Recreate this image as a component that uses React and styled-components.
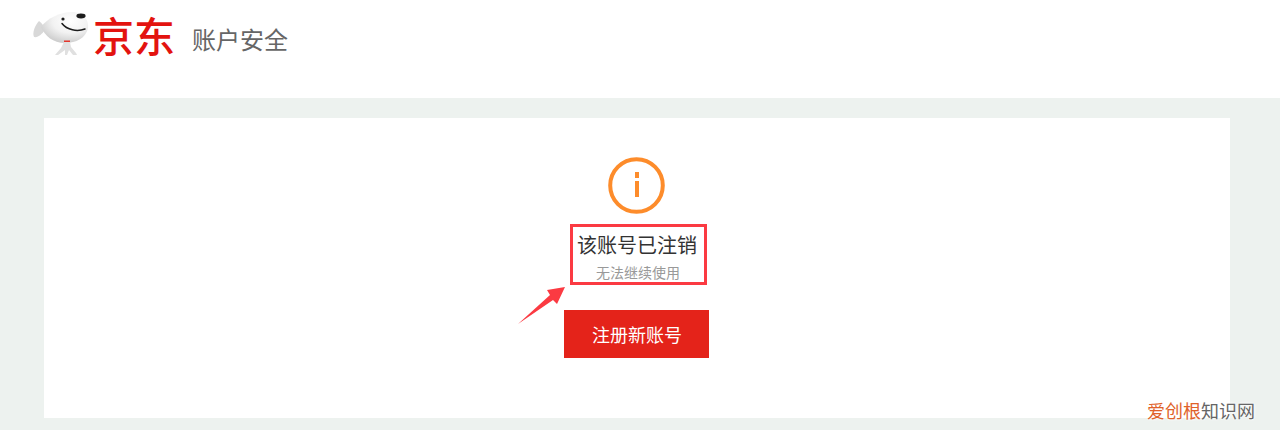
import React from "react";
import styled, { createGlobalStyle } from "styled-components";

const GlobalStyle = createGlobalStyle`
  html, body {
    margin: 0;
    padding: 0;
    background: #fff;
    font-family: "Noto Sans CJK SC", "Liberation Sans", sans-serif;
  }
`;

const Page = styled.div`
  position: relative;
  width: 1280px;
  height: 430px;
  overflow: hidden;
  background: #edf2ef;
`;

const Header = styled.header`
  height: 98px;
  box-sizing: border-box;
  background: #fff;
  padding: 12px 0 0 32px;
  display: flex;
  align-items: flex-start;
`;

const Logo = styled.div`
  display: flex;
  align-items: flex-end;
  height: 44px;
`;

const Brand = styled.span`
  margin-left: -3px;
  font-size: 41px;
  font-weight: 500;
  line-height: 44px;
  color: #e3130f;
  height: 44px;
`;

const Section = styled.span`
  margin-left: 17px;
  font-size: 24px;
  line-height: 54px;
  height: 44px;
  color: #666;
`;

const Card = styled.main`
  width: 1186px;
  height: 300px;
  margin: 20px 0 0 44px;
  padding: 39px 2px 0 0;
  box-sizing: border-box;
  background: #fff;
  display: flex;
  flex-direction: column;
  align-items: center;
`;

const Notice = styled.div`
  margin: 10px 0 0 4px;
  width: 137px;
  height: 61px;
  box-sizing: border-box;
  border: 3px solid #fb3a42;
  display: flex;
  flex-direction: column;
  align-items: center;
`;

const Title = styled.div`
  margin: 3px 2px 0 0;
  font-size: 20px;
  line-height: 30px;
  color: #333;
  white-space: nowrap;
`;

const Sub = styled.div`
  margin: 2px 0 0 0;
  font-size: 14px;
  line-height: 20px;
  color: #999;
  white-space: nowrap;
`;

const Button = styled.button`
  margin-top: 25px;
  width: 145px;
  height: 48px;
  border: 0;
  padding: 0 0 0 2px;
  background: #e4231a;
  color: #fff;
  font-family: inherit;
  font-size: 18px;
`;

const Arrow = styled.svg`
  position: absolute;
  left: 515px;
  top: 284px;
`;

const Watermark = styled.div`
  position: absolute;
  left: 1147px;
  top: 397px;
  font-size: 18px;
  line-height: 26px;
  color: #666;
  white-space: nowrap;
  text-shadow: 0 0 3px #fff, 0 0 3px #fff;
`;

const Accent = styled.span`
  color: #e0622a;
`;

const Mascot = () => (
  <svg width="64" height="46" viewBox="0 0 64 46" style={{ marginTop: -2 }}>
    <defs>
      <radialGradient id="head" cx="0.62" cy="0.3" r="0.75">
        <stop offset="0" stopColor="#fff" />
        <stop offset="0.5" stopColor="#f2f2f2" />
        <stop offset="1" stopColor="#c8c8c8" />
      </radialGradient>
    </defs>
    <path d="M7 11 C3 15 0 23 2 27 C6 28 10 24 13 20 C12 16 10 13 7 11 Z" fill="#d8d8d8" />
    <path
      d="M9 17 C15 8 30 1 42 2 C52 3 57 10 56 18 C54 28 44 33 33 33 C21 33 13 26 9 17 Z"
      fill="url(#head)"
    />
    <ellipse cx="49" cy="6" rx="4.6" ry="2.4" fill="#1c1c1c" />
    <circle cx="31" cy="9" r="1.6" fill="#1c1c1c" />
    <path d="M30 13.5 C35 20 45 22 53 19" fill="none" stroke="#1c1c1c" strokeWidth="1.5" strokeLinecap="round" />
    <rect x="32" y="30.5" width="6" height="1.6" fill="#e3352b" />
    <path
      d="M32 32 L38 32 L39 37 L44 43 L45 45 L41 45 L37 40 L35 45 L33 45 L33 40 L26 45 L23 45 L29 38 Z"
      fill="#e0e0e0"
    />
  </svg>
);

const InfoIcon = () => (
  <svg width="57" height="57" viewBox="0 0 57 57">
    <circle cx="28.5" cy="28.5" r="26.3" fill="none" stroke="#fd8c2b" strokeWidth="4" />
    <rect x="27" y="15" width="4" height="6" fill="#fd8c2b" />
    <rect x="27" y="24" width="4" height="16" fill="#fd8c2b" />
  </svg>
);

export default function App() {
  return (
    <Page>
      <GlobalStyle />
      <Header>
        <Logo>
          <Mascot />
          <Brand>京东</Brand>
        </Logo>
        <Section>账户安全</Section>
      </Header>
      <Card>
        <InfoIcon />
        <Notice>
          <Title>该账号已注销</Title>
          <Sub>无法继续使用</Sub>
        </Notice>
        <Button>注册新账号</Button>
      </Card>
      <Arrow width="52" height="42" viewBox="0 0 52 42">
        <path d="M3 40 L35 11 L32 6 L50 3 L42 20 L38 16 Z" fill="#fb3a42" />
      </Arrow>
      <Watermark>
        <Accent>爱创根</Accent>知识网
      </Watermark>
    </Page>
  );
}
